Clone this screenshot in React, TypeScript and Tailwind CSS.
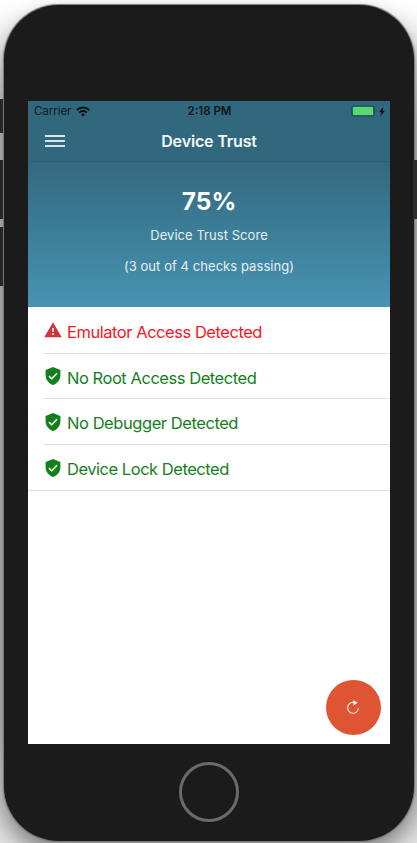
import React from "react";

type Check = { label: string; passed: boolean; tracking: string };

const checks: Check[] = [
  { label: "Emulator Access Detected", passed: false, tracking: "tracking-[-0.460px]" },
  { label: "No Root Access Detected", passed: true, tracking: "tracking-[-0.460px]" },
  { label: "No Debugger Detected", passed: true, tracking: "tracking-[-0.440px]" },
  { label: "Device Lock Detected", passed: true, tracking: "tracking-[-0.470px]" },
];

function WarningIcon() {
  return (
    <svg width="18" height="16" viewBox="0 0 18 16">
      <path d="M9 0.3 17.7 15.3H0.3Z" fill="#d3333b" />
      <path d="M8.2 6h1.6v4H8.2zM8.2 11.3h1.6v1.6H8.2z" fill="#fff" />
    </svg>
  );
}

function ShieldIcon() {
  return (
    <svg width="18" height="18" viewBox="0 0 18 18">
      <path
        d="M9 0 16.4 3.1V8.2C16.4 12.8 13.2 16.7 9 17.9 4.8 16.7 1.6 12.8 1.6 8.2V3.1Z"
        fill="#14801b"
      />
      <path d="M5 9.1 7.700 11.700 13 6.300" fill="none" stroke="#fff" strokeWidth="1.500" />
    </svg>
  );
}

function StatusBar() {
  return (
    <div className="grid h-5 grid-cols-3 items-center pl-1.5 pr-[5px] text-[11.5px] leading-5 text-[#0a1a20]">
      <div className="flex items-center gap-[5px]">
        <span className="tracking-[-0.050px]">Carrier</span>
        <svg width="14" height="11" viewBox="0 0 14 11" fill="none" stroke="#050b0e" strokeWidth="1.900">
          <path d="M.8 4.100C4.300.7 9.700.7 13.200 4.100" />
          <path d="M3.200 6.600C5.300 4.500 8.700 4.500 10.800 6.600" />
          <path d="M7 10.500 4.900 8.400C6.100 7.300 7.900 7.300 9.100 8.400Z" fill="#050b0e" stroke="none" />
        </svg>
      </div>
      <div className="whitespace-nowrap text-center font-semibold text-[#08161b]">2:18 PM</div>
      <div className="flex items-center justify-end gap-[2px]">
        <svg width="26" height="12" viewBox="0 0 26 12">
          <rect x=".8" y=".8" width="22.400" height="10.400" rx="2" fill="none" stroke="#26505f" strokeWidth="1.300" />
          <rect x="2" y="2" width="20" height="8" rx=".6" fill="#59db6b" />
          <path d="M24.500 4.300C25.900 5 25.900 7 24.500 7.700Z" fill="#26505f" />
        </svg>
        <svg width="6" height="9" viewBox="0 0 6 9">
          <path d="M4.200 0 .2 5.200H2.500L1.700 9 5.900 3.700H3.500Z" fill="#050b0e" />
        </svg>
      </div>
    </div>
  );
}

function CheckRow({ check, last }: { check: Check; last: boolean }) {
  return (
    <li className={last ? "border-b border-[#dddee0]" : "pl-4"}>
      <div
        className={
          last
            ? "flex h-[45px] items-center pl-4"
            : "flex h-[45.700px] items-center border-b border-[#dedfe1]"
        }
      >
        <span className="flex w-[23px]">{check.passed ? <ShieldIcon /> : <WarningIcon />}</span>
        <span
          className={`whitespace-nowrap pt-[3px] text-[16.5px] leading-5 ${check.tracking} ${
            check.passed ? "text-[#14801b]" : "text-[#f6161d]"
          }`}
        >
          {check.label}
        </span>
      </div>
    </li>
  );
}

export default function App() {
  return (
    <div className="relative h-[843px] w-[417px] overflow-hidden bg-[linear-gradient(180deg,#ffffff_0%,#f2f2f2_5%,#c4c4c4_15%,#c0c0c0_85%,#e4e4e4_100%)] pl-1 pt-[5px] font-['Inter','Liberation_Sans',sans-serif]">
      <div className="absolute left-0 top-[99px] h-[34px] w-[4px] border-r border-[#555] bg-[#2d2d2d]" />
      <div className="absolute left-0 top-[160px] h-[59px] w-[4px] border-r border-[#555] bg-[#2d2d2d]" />
      <div className="absolute left-0 top-[227px] h-[59px] w-[4px] border-r border-[#555] bg-[#2d2d2d]" />

      <main className="relative flex h-[836px] w-[410px] flex-col items-center rounded-[55px] bg-[#1b1b1b] shadow-[0_0_1px_0.5px_#777,0_12px_24px_rgba(0,0,0,0.450)]">
        <div className="h-24 shrink-0" />
        <section className="flex h-[643px] w-[362px] shrink-0 flex-col bg-white">
          <header className="h-[61px] bg-[#32687e]">
            <StatusBar />
            <div className="grid h-[41px] grid-cols-[60px_1fr_60px] items-center border-b border-[#2d5e72]">
              <button aria-label="Menu" className="flex flex-col gap-[3px] pl-[17px]">
                <i className="h-0.5 w-5 bg-[#d8e5e9]" />
                <i className="h-0.5 w-5 bg-[#d8e5e9]" />
                <i className="h-0.5 w-5 bg-[#d8e5e9]" />
              </button>
              <h1 className="text-center text-[16px] font-semibold leading-5 tracking-[-0.150px] text-[#f4f8fa]">
                Device Trust
              </h1>
            </div>
          </header>
          <div className="flex h-[145px] flex-col items-center bg-linear-to-b from-[#33697f] to-[#4794b3] pt-[23px] text-[#e6f0f4]">
            <div className="text-[24.5px] font-bold leading-8 text-white">75%</div>
            <p className="mt-[8px] text-[13px] leading-5 tracking-[0.050px]">Device Trust Score</p>
            <p className="mt-[11px] text-[13px] leading-5 tracking-[0.060px]">(3 out of 4 checks passing)</p>
          </div>
          <ul className="pt-px">
            {checks.map((check, index) => (
              <CheckRow key={check.label} check={check} last={index === checks.length - 1} />
            ))}
          </ul>
          <div className="mb-[9px] mr-[9px] mt-auto flex justify-end">
            <button
              aria-label="Refresh"
              className="flex h-[55px] w-[55px] items-center justify-center rounded-full bg-[#df5433] pb-px pr-px"
            >
              <svg width="14" height="14" viewBox="0 0 14 14">
                <path d="M7.500 2.500A5.400 5.400 0 1 0 12.400 8" fill="none" stroke="#fbe4de" strokeWidth="1.200" />
                <path d="M7.300 0 11.700 2.700 7.300 5.400Z" fill="#fff" />
              </svg>
            </button>
          </div>
        </section>
        <div className="mt-[18px] h-[60px] w-[60px] shrink-0 rounded-full border-[3px] border-[#6b6b6b]" />
      </main>
      <div className="absolute right-0 top-[160px] h-[59px] w-[4px] bg-[#2d2d2d]" />
    </div>
  );
}
